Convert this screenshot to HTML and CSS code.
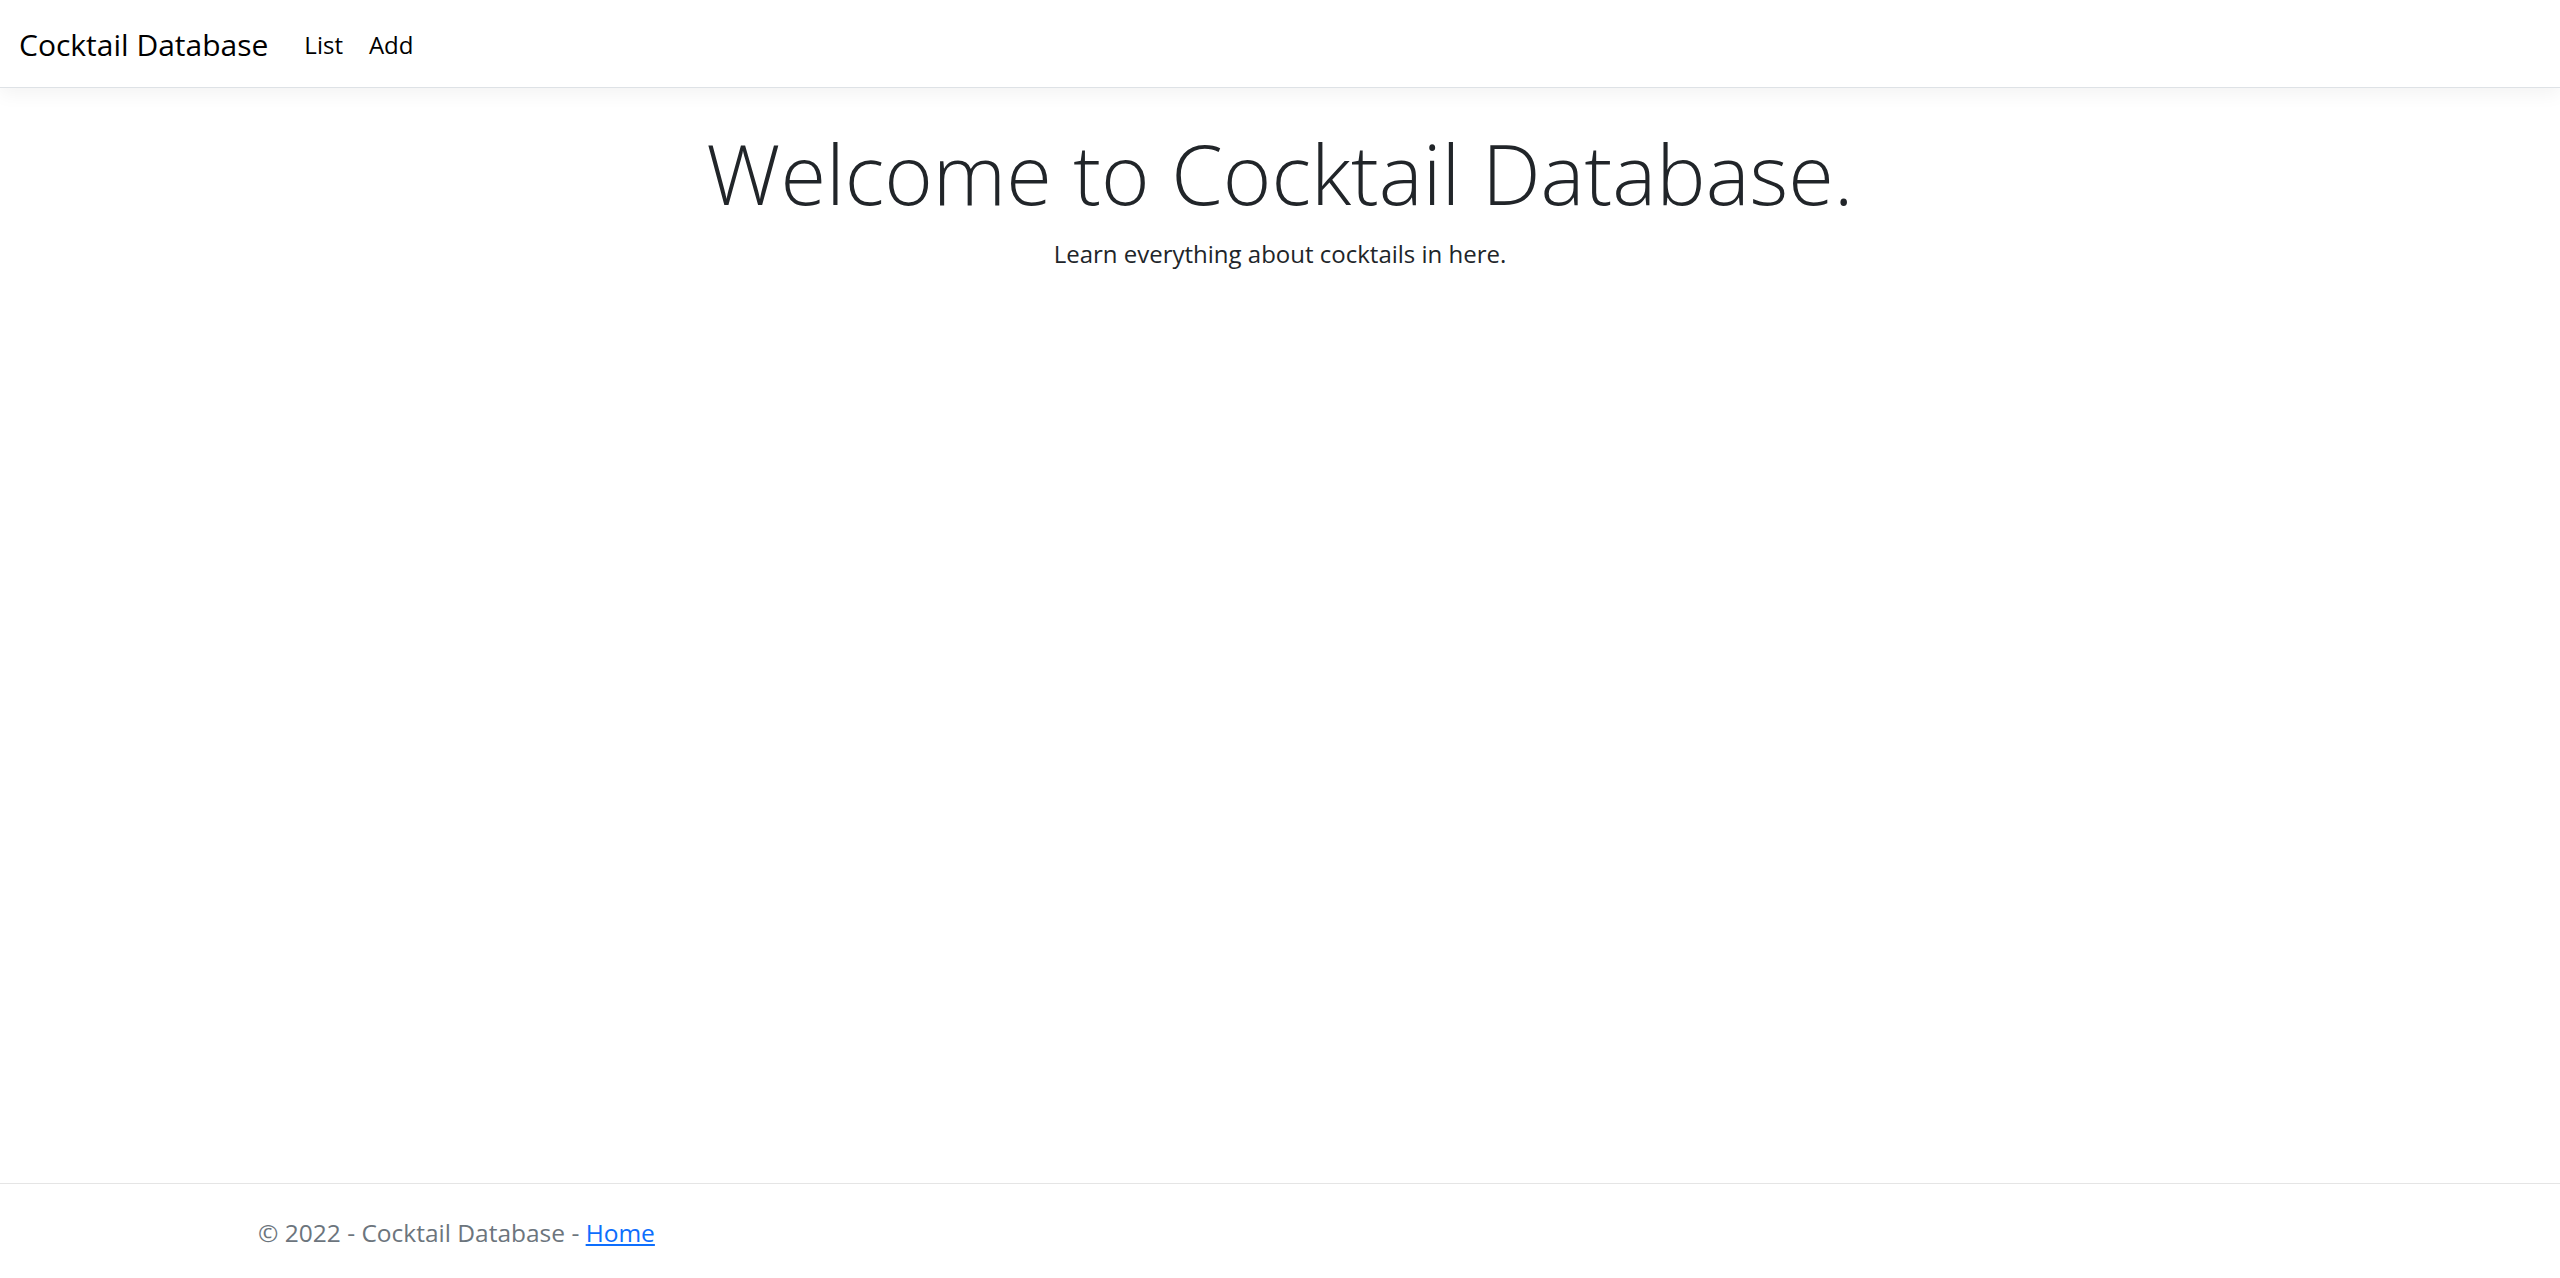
FILE: index.html
```html
<!DOCTYPE html>
<html lang="en">
<head>
<meta charset="utf-8">
<title>Cocktail Database</title>
<link rel="stylesheet" href="styles.css">
</head>
<body>
<header class="navbar">
  <a class="brand" href="#">Cocktail Database</a>
  <nav class="nav">
    <a class="nav-link" href="#">List</a>
    <a class="nav-link" href="#">Add</a>
  </nav>
</header>
<main class="main">
  <h1 class="display">Welcome to Cocktail Database.</h1>
  <p class="lead">Learn everything about cocktails in here.</p>
</main>
<footer class="footer">
  <div class="footer-inner">© 2022 - Cocktail Database - <a class="footer-link" href="#">Home</a></div>
</footer>
</body>
</html>
```

FILE: styles.css
```css
html, body {
  margin: 0;
  padding: 0;
}
body {
  min-height: 100vh;
  display: flex;
  flex-direction: column;
  font-family: "Open Sans", "Noto Sans", sans-serif;
  color: #212529;
  background: #fff;
  font-size: 24px;
}
.navbar {
  height: 88px;
  box-sizing: border-box;
  display: flex;
  align-items: center;
  padding: 2px 19px 0;
  border-bottom: 1px solid #dee2e6;
  box-shadow: 0 6px 18px rgba(0, 0, 0, 0.05);
  background: #fff;
  position: relative;
  z-index: 1;
}
.brand {
  font-size: 30px;
  color: #000;
  text-decoration: none;
  margin-right: 24px;
}
.nav {
  display: flex;
}
.nav-link {
  color: #000;
  text-decoration: none;
  font-size: 24px;
  padding: 0 12px 0 12px;
}
.nav-link + .nav-link {
  padding-left: 14px;
}
.main {
  flex: 1;
  text-align: center;
}
.display {
  font-weight: 300;
  font-size: 83px;
  line-height: 1.2;
  margin: 35px 0 0;
}
.lead {
  margin: 14px 0 0;
  font-size: 24px;
}
.footer {
  border-top: 1px solid #e5e5e5;
  height: 95px;
  box-sizing: border-box;
  display: flex;
  align-items: center;
  color: #6c757d;
}
.footer-inner {
  padding-left: 258px;
  font-size: 24.5px;
  padding-top: 2px;
}
.footer-link {
  color: #0d6efd;
  text-decoration: underline;
}
```
